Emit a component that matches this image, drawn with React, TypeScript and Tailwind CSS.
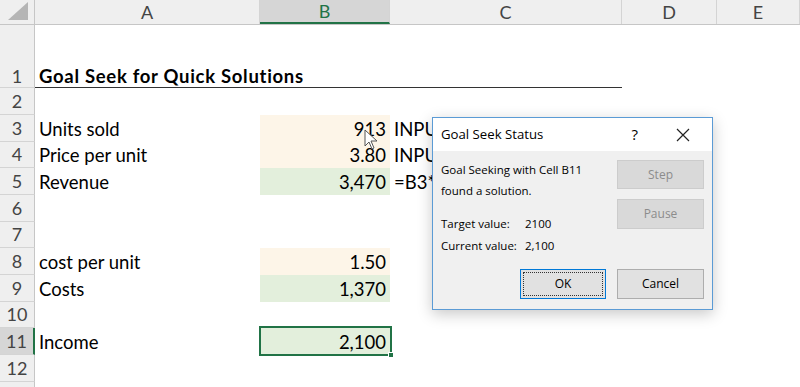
import React from "react"

const cols = ["A", "B", "C", "D", "E"]
const colW = ["w-[225px]", "w-[130px]", "w-[232px]", "w-[95px]", "w-[83px]"]

type Row = {
    n?: number
    h: string
    a?: string
    b?: string
    c?: string
    fill?: "cream" | "green"
    bold?: boolean
    selected?: boolean
}

const rows: Row[] = [
    { n: 1, h: "h-[63px]", a: "Goal Seek for Quick Solutions", bold: true },
    { n: 2, h: "h-[27px]" },
    { n: 3, h: "h-[27px]", a: "Units sold", b: "913", c: "INPUT", fill: "cream" },
    { n: 4, h: "h-[26px]", a: "Price per unit", b: "3.80", c: "INPUT", fill: "cream" },
    { n: 5, h: "h-[27px]", a: "Revenue", b: "3,470", c: "=B3*B4", fill: "green" },
    { n: 6, h: "h-[27px]" },
    { n: 7, h: "h-[26px]" },
    { n: 8, h: "h-[27px]", a: "cost per unit", b: "1.50", fill: "cream" },
    { n: 9, h: "h-[27px]", a: "Costs", b: "1,370", fill: "green" },
    { n: 10, h: "h-[26px]" },
    { n: 11, h: "h-[27px]", a: "Income", b: "2,100", fill: "green", selected: true },
    { n: 12, h: "h-[27px]" },
    { h: "h-[27px]" },
]

function Dialog() {
    return (
        <div className="absolute left-[432px] top-[117px] w-[281px] h-[193px] border border-[#5b9bd5] bg-[#f0f0f0] shadow-[0_4px_14px_rgba(0,0,0,0.22)] flex flex-col font-['Open_Sans',sans-serif] text-[11.5px] text-black">
            <div className="h-[33px] bg-white flex items-center pl-[8px] pr-[18px] shrink-0">
                <span className="flex-1 text-[13.2px] whitespace-nowrap">Goal Seek Status</span>
                <span className="text-[15px] mr-[38px]">?</span>
                <svg width="14" height="14" viewBox="0 0 14 14" className="mr-[4px]">
                    <path d="M1 1 L13 13 M13 1 L1 13" stroke="#222" strokeWidth="1.2" />
                </svg>
            </div>
            <div className="flex-1 flex flex-col pl-[8px] pr-[8px] pt-[9px]">
                <div className="flex">
                    <div className="flex-1 flex flex-col">
                        <div className="leading-[20px]">Goal Seeking with Cell B11</div>
                        <div className="leading-[21px]">found a solution.</div>
                        <div className="flex mt-[12px] leading-[22px]">
                            <span className="w-[84px]">Target value:</span>
                            <span>2100</span>
                        </div>
                        <div className="flex leading-[22px]">
                            <span className="w-[84px]">Current value:</span>
                            <span>2,100</span>
                        </div>
                    </div>
                    <div className="w-[87px] flex flex-col gap-[10px]">
                        <button className="h-[29px] bg-[#d9d9d9] border border-[#cccccc] text-[#8c8c8c] text-[12px]">Step</button>
                        <button className="h-[30px] bg-[#d9d9d9] border border-[#cccccc] text-[#8c8c8c] text-[12px]">Pause</button>
                    </div>
                </div>
                <div className="flex justify-end gap-[11px] mt-auto mb-[10px] text-[12px]">
                    <button className="w-[86px] h-[30px] border border-[#0078d7] bg-[#e1e1e1] p-[2px]">
                        <div className="w-full h-full border border-dotted border-[#333] flex items-center justify-center">OK</div>
                    </button>
                    <button className="w-[87px] h-[30px] bg-[#e1e1e1] border border-[#adadad]">Cancel</button>
                </div>
            </div>
        </div>
    )
}

export default function App() {
    return (
        <div className="w-[800px] h-[387px] overflow-hidden relative bg-white font-['Lato',sans-serif] text-[18.5px] text-black">
            {/* column headers */}
            <div className="flex h-[25px] bg-[#efefef] border-b border-[#c6c6c6] text-[#444] text-[18px]">
                <div className="w-[35px] shrink-0 border-r border-[#c6c6c6] flex items-end justify-end pr-[6px] pb-[4px]">
                    <svg width="20" height="18" viewBox="0 0 20 18">
                        <path d="M20 0 L20 18 L0 18 Z" fill="#b5b5b5" />
                    </svg>
                </div>
                {cols.map((c, i) => (
                    <div
                        key={c}
                        className={`${colW[i]} shrink-0 flex items-center justify-center border-r border-[#d4d4d4] ${
                            c === "B" ? "bg-[#d6d6d6] text-[#217346] border-b-2 border-b-[#217346]" : ""
                        }`}
                    >
                        {c}
                    </div>
                ))}
            </div>

            {rows.map((r, idx) => (
                <div key={idx} className={`flex ${r.h} ${r.bold ? "leading-[22px]" : "leading-[26px]"}`}>
                    <div
                        className={`w-[35px] shrink-0 flex items-end justify-center text-[#444] text-[18px] border-b border-[#d4d4d4] ${
                            r.selected ? "bg-[#d6d6d6] border-r-2 border-r-[#217346]" : "bg-[#efefef] border-r border-r-[#c6c6c6]"
                        }`}
                    >
                        {r.n}
                    </div>
                    <div className={`w-[225px] shrink-0 flex items-end pl-[4px] whitespace-nowrap ${r.bold ? "font-bold tracking-[0.7px] border-b-[1.5px] border-[#333]" : ""}`}>
                        {r.a}
                    </div>
                    <div
                        className={`w-[130px] shrink-0 flex items-end justify-end pr-[4px] relative ${
                            r.fill === "cream" ? "bg-[#fdf5e8]" : r.fill === "green" ? "bg-[#e3efdc]" : ""
                        } ${r.bold ? "border-b-[1.5px] border-[#333]" : ""}`}
                    >
                        {r.b}
                        {r.selected && (
                            <div className="absolute -left-[1px] -top-[2px] -right-[2px] -bottom-[1px] border-2 border-[#217346]">
                                <div className="absolute -right-[4px] -bottom-[4px] w-[6px] h-[6px] bg-[#217346] border border-white" />
                            </div>
                        )}
                    </div>
                    <div className={`w-[232px] shrink-0 flex items-end pl-[4px] whitespace-nowrap ${r.bold ? "border-b-[1.5px] border-[#333]" : ""}`}>
                        {r.c}
                    </div>
                    <div className="w-[95px] shrink-0" />
                    <div className="w-[83px] shrink-0" />
                </div>
            ))}

            {/* mouse pointer */}
            <svg className="absolute left-[364px] top-[129px]" width="16" height="22" viewBox="0 0 16 22">
                <path d="M1 1 L1 17 L5 13 L8 20 L10 19 L7 12 L13 12 Z" fill="white" stroke="#555" strokeWidth="1" />
            </svg>

            <Dialog />
        </div>
    )
}
